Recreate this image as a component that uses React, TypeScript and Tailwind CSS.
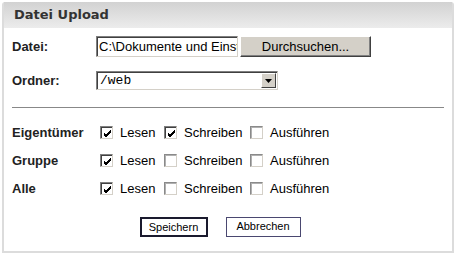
import React from "react";

const head = "font-['DejaVu_Sans',Verdana,sans-serif] font-bold";
const bold = "font-['Liberation_Sans',Arial,sans-serif] font-bold";
const arial = "font-['Liberation_Sans',Arial,sans-serif]";

function Check({ checked }: { checked?: boolean }) {
  return (
    <span
      className={`inline-flex h-[13px] w-[13px] items-center justify-center border-t border-l border-b border-r border-b-[#d4d0c8] border-r-[#d4d0c8] bg-white ${
        checked ? "border-t-[#808080] border-l-[#808080] shadow-[inset_1px_1px_0_#404040]" : "border-t-[#8a8a8a] border-l-[#8a8a8a] shadow-[inset_1px_1px_0_#b0b0b0]"
      }`}
    >
      {checked && (
        <svg width="9" height="9" viewBox="0 0 9 9" className="ml-[1px] mt-[1px]">
          <path d="M1 4 L3 6 L8 1 M1 5 L3 7 L8 2 M1 6 L3 8 L8 3" stroke="#000" strokeWidth="1" fill="none" />
        </svg>
      )}
    </span>
  );
}

function PermRow({ label, flags }: { label: string; flags: boolean[] }) {
  const names = ["Lesen", "Schreiben", "Ausführen"];
  const widths = ["w-[64px]", "w-[86px]", "w-[90px]"];
  return (
    <div className="flex h-[28px] items-center">
      <div className={`${bold} w-[88px] text-[13px] text-[#222]`}>{label}</div>
      {names.map((n, i) => (
        <div key={n} className={`flex items-center ${widths[i]}`}>
          <Check checked={flags[i]} />
          <span className={`${arial} ml-[7px] text-[13px] text-black`}>{n}</span>
        </div>
      ))}
    </div>
  );
}

export default function App() {
  return (
    <div className="h-[256px] w-[456px] bg-white p-[2px]">
      <div className="flex h-[251px] flex-col rounded-t-[3px] border-2 border-t-0 border-[#dcdcdc]">
        <div className="flex h-[26px] items-center bg-gradient-to-b from-[#d2d2d2] to-[#ececec] pl-[10px]">
          <span className={`${head} text-[13px] text-[#333]`}>Datei Upload</span>
        </div>
        <div className="flex flex-col px-[8px] pt-[8px]">
          <div className="flex items-center">
            <div className={`${bold} w-[84px] text-[13px] text-[#222]`}>Datei:</div>
            <div className="flex h-[21px] w-[142px] items-center overflow-hidden whitespace-nowrap border border-t-[#7f7f7f] border-l-[#7f7f7f] border-b-[#d4d0c8] border-r-[#d4d0c8] bg-white pl-[2px] shadow-[inset_1px_1px_0_#404040]">
              <span className={`${arial} text-[13px] text-black`}>C:\Dokumente und Einstellungen</span>
            </div>
            <button className={`${arial} ml-[2px] h-[21px] w-[131px] border border-t-white border-l-white border-b-[#404040] border-r-[#404040] bg-[#d4d0c8] text-[13px] text-black shadow-[inset_-1px_-1px_0_#808080]`}>
              Durchsuchen...
            </button>
          </div>
          <div className="mt-[14px] flex items-center">
            <div className={`${bold} w-[84px] text-[13px] text-[#222]`}>Ordner:</div>
            <div className="flex h-[19px] w-[182px] items-center border border-t-[#7f7f7f] border-l-[#7f7f7f] border-b-[#d4d0c8] border-r-[#d4d0c8] bg-white shadow-[inset_1px_1px_0_#404040]">
              <span className="flex-1 pl-[3px] font-['Liberation_Mono','Courier_New',monospace] text-[13px] text-black">/web</span>
              <span className="mr-[1px] flex h-[15px] w-[15px] items-center justify-center border border-t-white border-l-white border-b-[#404040] border-r-[#404040] bg-[#d4d0c8]">
                <svg width="7" height="4" viewBox="0 0 7 4">
                  <path d="M0 0 H7 L3.5 4 Z" fill="#000" />
                </svg>
              </span>
            </div>
          </div>
          <div className="mb-[11px] mt-[16px] h-px bg-[#888]"></div>
          <PermRow label="Eigentümer" flags={[true, true, false]} />
          <PermRow label="Gruppe" flags={[true, false, false]} />
          <PermRow label="Alle" flags={[true, false, false]} />
          <div className="mt-[14px] flex justify-center gap-[18px] pr-[16px]">
            <button className={`${arial} h-[20px] w-[68px] border-2 border-[#1a1a2e] bg-white text-[11px] text-black`}>Speichern</button>
            <button className={`${arial} h-[20px] w-[75px] border border-[#4a4870] bg-white text-[11px] text-black`}>Abbrechen</button>
          </div>
        </div>
      </div>
    </div>
  );
}
